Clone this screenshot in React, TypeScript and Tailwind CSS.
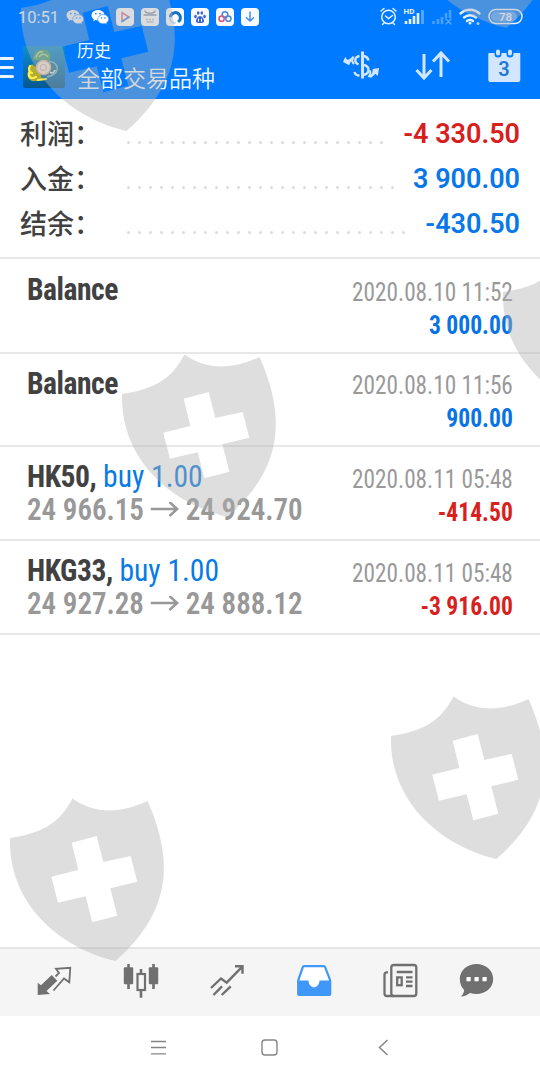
import React from "react";

const condensed = "font-['Roboto_Condensed','Roboto',sans-serif] [font-stretch:75%]";

const SHIELD =
  "M0 40 C32 35 49 26 62.5 .5 C84 16 110 16 137.5 3 C165 65 160 115 105.5 163 C50 150 -2 106 0 40Z M61.7 44.7 L68.3 72 41.3 78.7 48 104.7 75.7 98.3 82.3 124.3 107.3 117.7 100.3 90.3 127.3 83.7 120.7 58 93.3 64 86.7 38Z";

function Shield({ className }: { className: string }) {
  return (
    <svg viewBox="0 0 156 164" className={`absolute h-[164px] w-[156px] text-[#b0b0b0]/[.42] ${className}`}>
      <path d={SHIELD} fill="currentColor" fillRule="evenodd" />
    </svg>
  );
}

function WeChat({ color }: { color: string }) {
  return (
    <svg viewBox="0 0 18 18" className="size-[18px]">
      <path d="M7 2C3.300 2 .5 4.300 .5 7.200c0 1.700.9 3.100 2.300 4L2.300 13.200l2.300-1.100c.8.200 1.600.3 2.400.3C10.700 12.400 13.500 10 13.500 7.200S10.700 2 7 2Z" fill={color} />
      <path d="M12.200 6.600c-3.100 0-5.500 2-5.500 4.600s2.400 4.600 5.500 4.600c.7 0 1.300-.1 1.900-.3l1.900 1-.5-1.700c1.300-.9 2.200-2.200 2.200-3.600 0-2.600-2.400-4.600-5.500-4.600Z" fill={color} stroke="#1e83f5" strokeWidth=".6" />
      <g fill="#1e83f5"><circle cx="4.800" cy="5.600" r=".9" /><circle cx="9" cy="5.600" r=".9" /><circle cx="10.500" cy="10" r=".8" /><circle cx="14" cy="10" r=".8" /></g>
    </svg>
  );
}

function StatusTile({ children }: { children: React.ReactNode }) {
  return (
    <svg viewBox="0 0 18 18" className="size-[18px]" fill="none" strokeLinecap="round">
      <rect width="18" height="18" rx="4" fill="#f8fbff" />
      {children}
    </svg>
  );
}

function StatusBar() {
  return (
    <div className="flex h-8 items-center pt-px pl-[18px]">
      <span className="w-12 pt-[3px] font-['Roboto',sans-serif] text-[16.5px] leading-none text-[#e4f1ff]">10:51</span>
      <div className="flex gap-[7px]">
        <WeChat color="#e4efff" />
        <WeChat color="#fff" />
        <StatusTile><path d="M6 4.500v9l7-4.500Z" stroke="#d86a8a" strokeWidth="1.500" /><path d="M6 13.500 13 9" stroke="#438fe8" strokeWidth="1.500" /></StatusTile>
        <StatusTile><path d="M4 3c1 3 9 3 10 0M3 7h12" stroke="#8493a8" strokeWidth="1.300" /><path d="M6 11v1m3-1v1m3-1v1M6 14h6" stroke="#9aa7ba" strokeWidth="1.200" /></StatusTile>
        <StatusTile><path d="M4.500 8a5 5 0 0 1 9-1c1.500 2 1 5-.5 6" stroke="#1873c6" strokeWidth="3" /><path d="M4 10a5 5 0 0 0 5 5" stroke="#b2dcfb" strokeWidth="2" /></StatusTile>
        <StatusTile><g fill="#3d63c8"><ellipse cx="4.500" cy="8.500" rx="1.300" ry="1.700" /><ellipse cx="7.200" cy="5" rx="1.300" ry="1.700" /><ellipse cx="10.800" cy="5" rx="1.300" ry="1.700" /><ellipse cx="13.500" cy="8.500" rx="1.300" ry="1.700" /><path d="M9 8c-2 0-4 3-4 5s2 2 4 2 4 0 4-2-2-5-4-5Z" /></g><path d="M7.500 11v2.200m3-2.200v2.200" stroke="#fff" /></StatusTile>
        <StatusTile><g strokeWidth="1.500"><circle cx="9" cy="6.500" r="2.800" stroke="#4a86dc" /><circle cx="5.600" cy="10.700" r="2.600" stroke="#d65474" /><circle cx="12.400" cy="10.700" r="2.600" stroke="#4a86dc" /></g></StatusTile>
        <StatusTile><path d="M9 4v9M5.500 9.700 9 13l3.500-3.300" stroke="#438fe8" strokeWidth="1.500" /></StatusTile>
      </div>
      <svg viewBox="378 6 148 22" className="ml-[119px] h-[22px] w-[148px] shrink-0" fill="none" stroke="#e4f1ff" strokeLinecap="round">
        <circle cx="388.500" cy="17" r="6.800" strokeWidth="1.500" />
        <path d="M385.500 16l3 2.500 4-3M381 11l3-2.500m12 2.500-3-2.500M384.500 22.500l-2 2m10-2 2 2" strokeWidth="1.500" />
        <text x="403.500" y="14" fill="#e4f1ff" stroke="none" fontSize="8" fontWeight="700" fontFamily="Roboto">HD</text>
        <g strokeWidth="2.600" strokeLinecap="butt">
          <path d="M406 24v-3M410 24v-5M414 24v-8M418 24V13" />
          <path d="M422.500 24V10" opacity=".4" />
          <path d="M433.500 24v-3M438 24v-5M442 24v-7M446 18V13M450 18V10" opacity=".32" />
        </g>
        <path d="m446 19 5 5m0-5-5 5" strokeWidth="1.400" opacity=".4" />
        <g strokeWidth="2.400"><path d="M460.500 13.500c5.500-5 13.500-5 19 0M464 17.500c3.500-3 8.500-3 12 0M467 21c2-1.500 4-1.500 6 0" /></g>
        <circle cx="470" cy="23" r="1.500" fill="#e4f1ff" stroke="none" />
        <circle cx="478" cy="23.500" r="1.500" fill="#a9cdf8" stroke="none" />
        <rect x="489" y="9.500" width="33" height="14" rx="7" strokeWidth="1.500" />
        <rect x="491" y="11.500" width="26" height="10" rx="5" fill="#fff" fillOpacity=".3" stroke="none" />
        <text x="505.500" y="20.700" textAnchor="middle" fill="#eef6ff" stroke="none" fontSize="11.500" fontWeight="500" fontFamily="Roboto">78</text>
      </svg>
    </div>
  );
}

function AppLogo() {
  return (
    <svg viewBox="0 0 42 42" className="ml-[9px] size-[42px]">
      <defs>
        <linearGradient id="logo-bg" x1="0" y1="0" x2="0" y2="1"><stop stopColor="#0e8fd0" /><stop offset="1" stopColor="#04588f" /></linearGradient>
      </defs>
      <rect width="42" height="42" rx="2" fill="url(#logo-bg)" />
      <path d="M10 14C10 7 16 2 20 4c5-1 9 4 7 11Z" fill="#4d9a72" />
      <path d="M13 12c1-5 4-7 7-6m-4 5c3-4 7-3 9 0" fill="none" stroke="#a9d5a0" strokeWidth="1.500" />
      <path d="M9 18c-5 5-5 12-3 15 4 4 9 1 14 1l-6-12Z" fill="#b3ac33" />
      <path d="M7 20c-2 3-1 6 2 7m-3 0c-1 5 3 6 7 4m2 3 8-1" stroke="#fdf04e" strokeWidth="2.200" fill="none" strokeLinecap="round" />
      <path d="M26 16c5-1 9 3 8 8-1 4-5 6-10 7" fill="#2a7394" stroke="#76b4c0" strokeWidth="1.500" />
      <path d="M27 26c2 2 4 1 5-2" fill="none" stroke="#d3ecec" strokeWidth="1.500" />
      <circle cx="20.500" cy="21.500" r="7" fill="#f3e1d6" stroke="#d0b7a0" strokeWidth="1.500" />
      <circle cx="20.500" cy="21.500" r="3" fill="none" stroke="#d3b5b0" strokeWidth="1.200" />
    </svg>
  );
}

function Header() {
  return (
    <header className="h-[98.5px] bg-[#007bff]">
      <StatusBar />
      <div className="flex h-[66px] items-start pt-[9px]">
        <div className="mt-4 flex w-3.5 flex-col gap-1.5">
          <div className="h-[3px] rounded-r bg-[#e9f4ff]" />
          <div className="h-[3px] rounded-r bg-[#e9f4ff]" />
          <div className="h-[3px] rounded-r bg-[#e9f4ff]" />
        </div>
        <div className="mt-[5px]"><AppLogo /></div>
        <div className="ml-3 font-['Noto_Sans_CJK_SC',sans-serif] text-[#eef6ff]">
          <div className="text-[17px] leading-[17px]">历史</div>
          <div className="mt-[3px] text-[23px] leading-8 font-[350]">全部交易品种</div>
        </div>
        <svg viewBox="340 46 184 40" className="mt-[5px] mr-4 ml-auto h-10 w-[184px]" fill="none" stroke="#d2e6ff">
          <path d="M362.500 51.500v27" strokeWidth="3" />
          <path d="M359.500 56c-5.500 1-5.500 6.500-1 8.500M364 56c2.500.5 4 2 4.500 4.500M363 65c7 .5 7.500 9 0 10M359.500 75.500c-3 0-4.500-1.500-5-3.500" strokeWidth="2.400" />
          <path d="M353.500 56.500c-2 3-2 5 .5 7.500M370 70.500c.8 2.500.2 4.500-1.500 6.500" strokeWidth="2" />
          <path d="m353 58-5 4M370 77l6-5.500" strokeWidth="2.600" />
          <path d="m343 62 2.200-5 2 2.700 4.300-.2-2.300 5.700Z" fill="#d2e6ff" stroke="none" />
          <path d="m379 68-1.200 8-2.600-2.400-3 .7.600-5.300Z" fill="#d2e6ff" stroke="none" />
          <path d="M424 54v24m-7.500-8 7.500 8 7.500-8M441 77V53m-8 8.500 8-8.500 8 8.500" strokeWidth="3" />
          <path d="M489.500 53h30q.8 0 .8 1v26q0 2-2 2h-28q-2 0-2-2V54q0-1 1.200-1Z" fill="#d2e6ff" stroke="none" />
          <path d="M498 49v5m12-5v5" stroke="#007bff" strokeWidth="7" strokeLinecap="round" />
          <path d="M498 51.500v2m12-2v2" strokeWidth="4" strokeLinecap="round" />
          <text x="504" y="75.500" textAnchor="middle" fill="#2179d4" stroke="none" fontSize="20" fontWeight="600" fontFamily="Roboto">3</text>
        </svg>
      </div>
    </header>
  );
}

const summary = [
  { label: "利润", value: "-4 330.50", color: "text-[#d7201d]", dots: 24 },
  { label: "入金", value: "3 900.00", color: "text-[#0878e8]", dots: 25 },
  { label: "结余", value: "-430.50", color: "text-[#0878e8]", dots: 26 },
];

function Summary() {
  return (
    <section className="h-[160.5px] border-b-2 border-[#e8e8e8] px-5 pt-3">
      {summary.map((s) => (
        <div key={s.label} className="flex h-[45px] items-center">
          <span className="w-[107px] shrink-0 pb-[2px] font-['Noto_Sans_CJK_SC',sans-serif] text-[27px] leading-[43px] font-medium text-[#414141]">{s.label}：</span>
          <div className="mt-[18px] flex gap-2">
            {Array.from({ length: s.dots }, (_, i) => (
              <i key={i} className="size-[3px] rounded-full bg-[#dcdcdc]" />
            ))}
          </div>
          <span className={`ml-auto pt-[2px] font-['Roboto',sans-serif] text-[27px] leading-[42px] font-semibold whitespace-pre ${s.color}`}>{s.value}</span>
        </div>
      ))}
    </section>
  );
}

type Deal = { name: string; side?: string; from?: string; to?: string; time: string; amount: string; color: string };
const deals: Deal[] = [
  { name: "Balance", time: "2020.08.10 11:52", amount: "3 000.00", color: "text-[#0873e4]" },
  { name: "Balance", time: "2020.08.10 11:56", amount: "900.00", color: "text-[#0873e4]" },
  { name: "HK50,", side: "buy 1.00", from: "24 966.15", to: "24 924.70", time: "2020.08.11 05:48", amount: "-414.50", color: "text-[#d8201d]" },
  { name: "HKG33,", side: "buy 1.00", from: "24 927.28", to: "24 888.12", time: "2020.08.11 05:48", amount: "-3 916.00", color: "text-[#d8201d]" },
];

function DealRow({ deal }: { deal: Deal }) {
  return (
    <div className={`flex h-[93.6px] justify-between border-b-2 border-[#e8e8e8] pr-[27px] pl-[27px] ${condensed}`}>
      <div className="pt-[13px] whitespace-nowrap">
        <div className="origin-left scale-x-[.97] text-[30.5px] leading-[33px]">
          <span className="font-bold tracking-[-0.5px] text-[#414141]">{deal.name}</span>
          {deal.side && <span className="text-[#087be5]"> {deal.side}</span>}
        </div>
        {deal.from && (
          <div className="flex origin-left scale-x-[.95] items-center text-[30.5px] leading-[33px] font-semibold text-[#989898]">
            <span>{deal.from}</span>
            <svg viewBox="0 0 30 16" className="mx-[7px] h-4 w-[30px]" fill="none" stroke="currentColor" strokeWidth="2.600">
              <path d="M0 7h28M20 0l8 7-8 7" />
            </svg>
            <span>{deal.to}</span>
          </div>
        )}
      </div>
      <div className="pt-[15.500px] text-right whitespace-nowrap">
        <div className="origin-right scale-x-[.93] text-[25px] leading-[33px] text-[#999]">{deal.time}</div>
        <div className={`origin-right scale-x-[.945] text-[25px] leading-[33px] font-bold ${deal.color}`}>{deal.amount}</div>
      </div>
    </div>
  );
}

function TabBar() {
  const cell = "flex w-[86.5px] items-center justify-center";
  return (
    <nav className="flex h-[69px] border-t-2 border-[#e5e5e5] bg-[#f5f5f5] pb-[6px] pl-[11px] text-[#707070]">
      <div className={cell}>
        <svg viewBox="36 962 36 36" className="size-9" fill="none" stroke="currentColor" strokeWidth="1.800">
          <path d="M37.700 995V982.700l3.300 2.500 10.700-10.200 5.600 5.700L46.500 991l3.500 3Z" fill="currentColor" stroke="none" />
          <path d="M55.500 976.500l3.500-3.500-3-4.200 14.300-1-1 14.500-5.300-3.800-10.500 12" />
        </svg>
      </div>
      <div className={cell}>
        <svg viewBox="122.500 962 36 36" className="size-9" fill="none" stroke="currentColor" strokeWidth="2.600">
          <rect x="123.300" y="967.300" width="9.400" height="17" rx="1" fill="currentColor" stroke="none" />
          <path d="M128 964v25M153 964v25M140.500 969v5M140.500 990v7.700" />
          <rect x="137" y="974" width="7.500" height="16" strokeWidth="2.200" />
          <rect x="148.300" y="967.300" width="9.400" height="17" rx="1" fill="currentColor" stroke="none" />
        </svg>
      </div>
      <div className={cell}>
        <svg viewBox="209 962 36 36" className="size-9" fill="none" stroke="currentColor" strokeWidth="2.400">
          <path d="m211 988 10-9.500 5.700 4.200 15.600-16M235 966.200h7.500v7.500M213.500 995l8.500-8.700M221.700 995l9-8.700" />
        </svg>
      </div>
      <div className={cell}>
        <svg viewBox="296 962 36 36" className="size-9" fill="none">
          <path d="M304 966.200h19.500q1.200 0 1.700 1.200l5 13v13q0 1.600-1.500 1.600h-29q-1.500 0-1.500-1.600v-13l4.500-13q.4-1.200 1.300-1.200Z" fill="#fff" stroke="#3f98f8" strokeWidth="2.200" />
          <path d="M298 980.500h10.500c.5 9 10.500 9 11 0H330v14h-32Z" fill="#3f98f8" />
        </svg>
      </div>
      <div className={cell}>
        <svg viewBox="382 962 36 36" className="size-9" fill="none" stroke="currentColor" strokeWidth="2.300">
          <rect x="391.300" y="965" width="25" height="31" rx="2.500" />
          <path d="M388 972.300h-1.200q-2.300 0-2.300 2.500v18.700q0 2.500 2.500 2.500h7M396.700 972h15.800M406 977.300h6.500M406 981.700h6.500M406 986h6.500" />
          <rect x="397.200" y="977.400" width="4.500" height="7.800" />
        </svg>
      </div>
      <div className="flex w-[67px] items-center justify-center">
        <svg viewBox="459 962 36 36" className="size-9">
          <path d="M476.500 964c9.200 0 16.700 6.500 16.700 15s-7.500 15-16.700 15c-2.300 0-4.500-.4-6.500-1.100-2.500 2-5.500 3.300-9.200 3.600 1.900-1.600 3-3.500 3.400-6.500-2.700-2.700-4.400-6.500-4.400-11 0-8.500 7.500-15 16.700-15Z" fill="currentColor" />
          <path d="M466.500 977h4.200v4.200h-4.200zM474.500 977h4.200v4.200h-4.200zM482.500 977h4.200v4.200h-4.200z" fill="#fff" />
        </svg>
      </div>
    </nav>
  );
}

export default function App() {
  return (
    <div className="relative flex h-[1080px] w-[540px] flex-col overflow-hidden bg-white">
      <Header />
      <Summary />
      <main className="flex-1 pt-[1.300px]">
        {deals.map((d, i) => <DealRow key={i} deal={d} />)}
      </main>
      <TabBar />
      <div className="flex h-16 items-center pb-[2px] pl-[150px] text-[#858585]">
        <svg viewBox="0 0 17 17" className="size-[17px]" fill="none" stroke="currentColor" strokeWidth="1.300"><path d="M1 2.500h15M1 8.500h15M1 14.800h15" /></svg>
        <svg viewBox="0 0 17 17" className="ml-[94px] size-[17px]" fill="none" stroke="currentColor" strokeWidth="1.400"><rect x="1" y="1" width="15" height="15" rx="3" /></svg>
        <svg viewBox="0 0 11 17" className="ml-[100px] h-[17px] w-[11px]" fill="none" stroke="currentColor" strokeWidth="1.500"><path d="M9.500 1 1.500 8.500l8 7.500" /></svg>
      </div>
      <div className="pointer-events-none absolute inset-0 overflow-hidden">
        <Shield className="top-[-32px] left-[21px]" />
        <Shield className="top-[-135px] left-[401px]" />
        <Shield className="top-[252px] left-[503px]" />
        <Shield className="top-[354px] left-[122px]" />
        <Shield className="top-[696px] left-[391px]" />
        <Shield className="top-[798px] left-[10px]" />
      </div>
    </div>
  );
}
